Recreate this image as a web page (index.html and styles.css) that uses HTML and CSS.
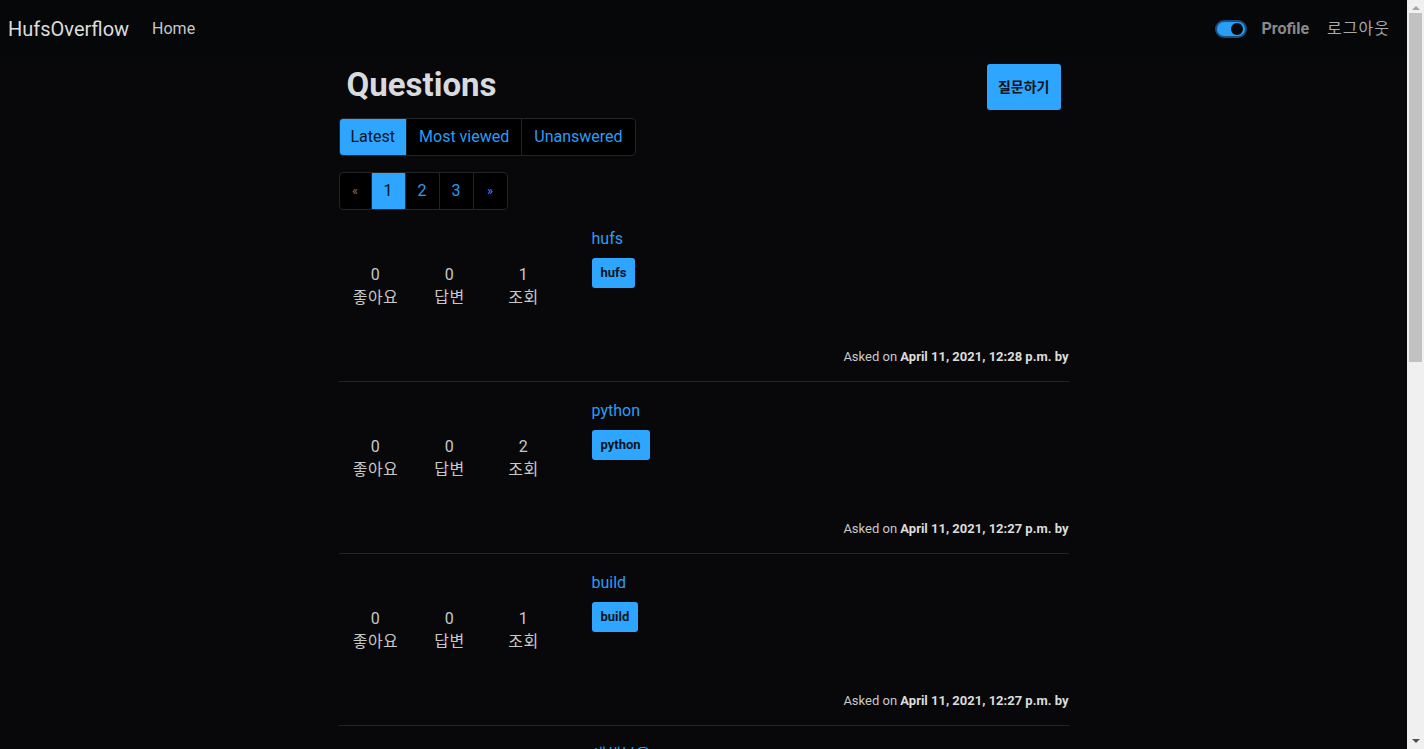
FILE: index.html
```html
<!DOCTYPE html>
<html lang="ko">
<head>
<meta charset="utf-8">
<title>HufsOverflow</title>
<link rel="stylesheet" href="styles.css">
</head>
<body>
<div class="viewport">
<div class="page">
<nav class="navbar">
  <div class="nav-left">
    <a class="brand" href="#">HufsOverflow</a>
    <a class="nav-link" href="#">Home</a>
  </div>
  <div class="nav-right">
    <span class="switch"><span class="knob"></span></span>
    <a class="nav-link profile" href="#">Profile</a>
    <a class="nav-link logout" href="#">로그아웃</a>
  </div>
</nav>
<main class="container">
  <div class="head">
    <h1 class="title">Questions</h1>
    <a class="ask-btn" href="#">질문하기</a>
  </div>
  <div class="btn-group">
    <a class="seg active" href="#">Latest</a>
    <a class="seg" href="#">Most viewed</a>
    <a class="seg" href="#">Unanswered</a>
  </div>
  <div class="pagination">
    <a class="page-item dim" href="#">&laquo;</a>
    <a class="page-item active" href="#">1</a>
    <a class="page-item" href="#">2</a>
    <a class="page-item" href="#">3</a>
    <a class="page-item arrow" href="#">&raquo;</a>
  </div>
  <div class="questions">
    <div class="q">
      <div class="stats">
        <div class="stat"><span>0</span><span>좋아요</span></div>
        <div class="stat"><span>0</span><span>답변</span></div>
        <div class="stat"><span>1</span><span>조회</span></div>
      </div>
      <div class="body">
        <a class="q-title" href="#">hufs</a>
        <div class="tags"><span class="tag">hufs</span></div>
        <div class="asked">Asked on <b>April 11, 2021, 12:28 p.m. by</b></div>
      </div>
    </div>
    <div class="q">
      <div class="stats">
        <div class="stat"><span>0</span><span>좋아요</span></div>
        <div class="stat"><span>0</span><span>답변</span></div>
        <div class="stat"><span>2</span><span>조회</span></div>
      </div>
      <div class="body">
        <a class="q-title" href="#">python</a>
        <div class="tags"><span class="tag">python</span></div>
        <div class="asked">Asked on <b>April 11, 2021, 12:27 p.m. by</b></div>
      </div>
    </div>
    <div class="q">
      <div class="stats">
        <div class="stat"><span>0</span><span>좋아요</span></div>
        <div class="stat"><span>0</span><span>답변</span></div>
        <div class="stat"><span>1</span><span>조회</span></div>
      </div>
      <div class="body">
        <a class="q-title" href="#">build</a>
        <div class="tags"><span class="tag">build</span></div>
        <div class="asked">Asked on <b>April 11, 2021, 12:27 p.m. by</b></div>
      </div>
    </div>
    <div class="q">
      <div class="stats">
        <div class="stat"><span>0</span><span>좋아요</span></div>
        <div class="stat"><span>0</span><span>답변</span></div>
        <div class="stat"><span>3</span><span>조회</span></div>
      </div>
      <div class="body">
        <a class="q-title" href="#">새해복을</a>
        <div class="tags"><span class="tag">django</span></div>
        <div class="asked">Asked on <b>April 11, 2021, 12:25 p.m. by</b></div>
      </div>
    </div>
  </div>
</main>
</div>
<div class="scrollbar">
  <div class="sb-arrow up"></div>
  <div class="sb-track"><div class="sb-thumb"></div></div>
  <div class="sb-arrow down"></div>
</div>
</div>
</body>
</html>
```

FILE: styles.css
```css
html, body {
  margin: 0;
  padding: 0;
  height: 100%;
  overflow: hidden;
}
body {
  background: #08080a;
  color: #d0d0d0;
  font-family: Roboto, "Noto Sans CJK KR", sans-serif;
  font-size: 16px;
  line-height: 24px;
}
a {
  text-decoration: none;
}
.viewport {
  display: flex;
  height: 749px;
}
.page {
  flex: 1;
  min-width: 0;
  height: 749px;
  overflow: hidden;
}
.scrollbar {
  width: 17px;
  flex: none;
  background: #f0f0f0;
  display: flex;
  flex-direction: column;
}
.sb-arrow {
  height: 12px;
  display: flex;
  justify-content: center;
}
.sb-arrow.up {
  align-items: flex-end;
  padding-bottom: 2px;
  height: 10px;
}
.sb-arrow.up::before {
  content: "";
  border-left: 4px solid transparent;
  border-right: 4px solid transparent;
  border-bottom: 4px solid #a3a3a3;
}
.sb-arrow.down {
  align-items: flex-start;
  padding-top: 2px;
  height: 10px;
}
.sb-arrow.down::before {
  content: "";
  border-left: 4px solid transparent;
  border-right: 4px solid transparent;
  border-top: 4px solid #505050;
}
.sb-track {
  flex: 1;
  padding: 1px 2px;
}
.sb-thumb {
  height: 349px;
  background: #c1c1c1;
}
.navbar {
  height: 56px;
  display: flex;
  align-items: center;
  justify-content: space-between;
  padding: 1px 17px 0 8px;
  box-sizing: border-box;
  background: #060709;
}
.nav-left, .nav-right {
  display: flex;
  align-items: center;
}
.brand {
  color: #dcdcdc;
  font-size: 20px;
  line-height: 30px;
  margin-right: 23px;
}
.nav-link {
  color: #c8c8c8;
  font-size: 16px;
}
.nav-right .logout {
  color: #a8a8a8;
  letter-spacing: 1px;
}
.nav-right .profile {
  color: #8a8a8a;
  font-weight: 700;
  margin: 0 18px 0 15px;
}
.switch {
  width: 26px;
  height: 14px;
  border-radius: 10px;
  background: #2a9df4;
  border: 2px solid #1b4e7a;
  display: flex;
  align-items: center;
  justify-content: flex-end;
  padding: 0 2px 0 0;
}
.knob {
  width: 12px;
  height: 12px;
  border-radius: 50%;
  background: #05070a;
}
.container {
  width: 730px;
  margin: 0 auto;
}
.head {
  display: flex;
  justify-content: space-between;
  align-items: flex-start;
  padding: 8px 8px 0 8px;
  height: 54px;
}
.title {
  margin: 0;
  font-size: 33px;
  line-height: 41px;
  font-weight: 700;
  color: #d8dade;
}
.ask-btn {
  background: #2ea6ff;
  color: #0a1420;
  font-size: 14px;
  font-weight: 700;
  padding: 11px 11px;
  line-height: 24px;
  border-radius: 3px;
}
.btn-group {
  display: inline-flex;
  border: 1px solid #222428;
  border-radius: 4px;
  overflow: hidden;
  background: #000;
}
.seg {
  color: #2a9df4;
  padding: 6px 12px;
  line-height: 24px;
  border-left: 1px solid #222428;
}
.seg:first-child {
  border-left: none;
}
.seg.active {
  background: #2ea6ff;
  color: #0a1420;
  padding: 6px 11px;
}
.pagination {
  display: flex;
  margin-top: 16px;
  width: max-content;
  border: 1px solid #222428;
  border-radius: 4px;
  overflow: hidden;
  background: #000;
}
.page-item {
  color: #2a9df4;
  padding: 6px 12px;
  min-width: 9px;
  text-align: center;
  line-height: 24px;
  border-left: 1px solid #222428;
}
.page-item:first-child {
  border-left: none;
}
.page-item.dim {
  color: #777;
  font-size: 13px;
  padding: 6px 11px;
}
.page-item.arrow {
  font-size: 13px;
}
.page-item.active {
  background: #2ea6ff;
  color: #0a1420;
}
.q {
  display: grid;
  grid-template-columns: 253px 1fr;
  padding: 17px 0 15px;
  border-bottom: 1px solid #242527;
}
.stats {
  display: grid;
  grid-template-columns: 74px 74px 74px;
  padding-top: 36px;
  align-content: start;
}
.stat {
  display: flex;
  flex-direction: column;
  align-items: center;
  color: #c8c8c8;
  line-height: 23px;
  letter-spacing: 0.5px;
}
.body {
  display: flex;
  flex-direction: column;
  align-items: flex-start;
}
.q-title {
  color: #2a9df4;
}
.tags {
  margin-top: 7px;
  display: flex;
  gap: 6px;
}
.tag {
  background: #2ea6ff;
  color: #0a1420;
  font-size: 13px;
  font-weight: 700;
  line-height: 30px;
  padding: 0 9px;
  border-radius: 3px;
}
.asked {
  margin-top: 60px;
  align-self: flex-end;
  font-size: 13px;
  line-height: 18px;
  color: #c8c8c8;
}
.asked b {
  color: #dcdcdc;
}
```
